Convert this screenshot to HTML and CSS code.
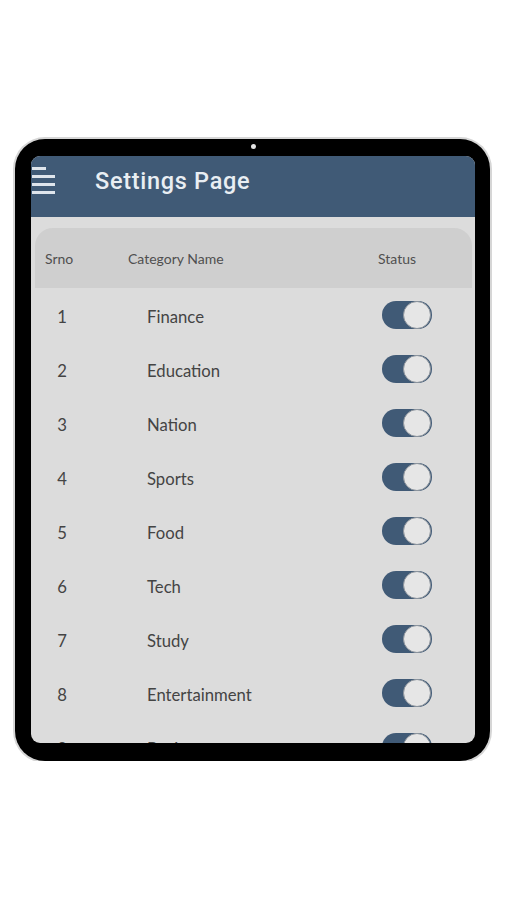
FILE: index.html
```html
<!DOCTYPE html>
<html lang="en">
<head>
<meta charset="utf-8">
<title>Settings Page</title>
<link rel="stylesheet" href="styles.css">
</head>
<body>
<div class="device">
  <span class="camera"></span>
  <div class="screen">
    <header class="appbar">
      <div class="menu" aria-label="menu">
        <span class="bar short"></span>
        <span class="bar"></span>
        <span class="bar"></span>
        <span class="bar"></span>
      </div>
      <h1 class="title">Settings Page</h1>
    </header>
    <div class="table">
      <div class="thead">
        <div class="th c1">Srno</div>
        <div class="th c2">Category Name</div>
        <div class="th c3">Status</div>
      </div>
      <div class="row"><div class="num">1</div><div class="name">Finance</div><div class="status"><span class="toggle"><span class="knob"></span></span></div></div>
      <div class="row"><div class="num">2</div><div class="name">Education</div><div class="status"><span class="toggle"><span class="knob"></span></span></div></div>
      <div class="row"><div class="num">3</div><div class="name">Nation</div><div class="status"><span class="toggle"><span class="knob"></span></span></div></div>
      <div class="row"><div class="num">4</div><div class="name">Sports</div><div class="status"><span class="toggle"><span class="knob"></span></span></div></div>
      <div class="row"><div class="num">5</div><div class="name">Food</div><div class="status"><span class="toggle"><span class="knob"></span></span></div></div>
      <div class="row"><div class="num">6</div><div class="name">Tech</div><div class="status"><span class="toggle"><span class="knob"></span></span></div></div>
      <div class="row"><div class="num">7</div><div class="name">Study</div><div class="status"><span class="toggle"><span class="knob"></span></span></div></div>
      <div class="row"><div class="num">8</div><div class="name">Entertainment</div><div class="status"><span class="toggle"><span class="knob"></span></span></div></div>
      <div class="row"><div class="num">9</div><div class="name">Business</div><div class="status"><span class="toggle"><span class="knob"></span></span></div></div>
    </div>
  </div>
</div>
</body>
</html>
```
FILE: styles.css
```css
html, body {
  margin: 0;
  padding: 0;
  background: #ffffff;
}

body {
  font-family: Lato, "Open Sans", sans-serif;
}

.device {
  position: relative;
  box-sizing: border-box;
  width: 475px;
  height: 622px;
  margin: 139px 0 0 15px;
  padding: 17px 15px 18px 16px;
  background: #000;
  border-radius: 30px;
  box-shadow: 0 0 0 2px #d6d6d6;
}

.camera {
  position: absolute;
  left: 236px;
  top: 5px;
  width: 5px;
  height: 5px;
  border-radius: 50%;
  background: #e4e4e4;
}

.screen {
  height: 100%;
  overflow: hidden;
  border-radius: 9px;
  background: #dcdcdc;
}

.appbar {
  box-sizing: border-box;
  height: 61px;
  padding: 0 0 12px 1px;
  display: flex;
  align-items: center;
  background: #405a76;
}

.menu {
  display: flex;
  flex-direction: column;
  gap: 5px;
  width: 23px;
}

.bar {
  display: block;
  width: 23px;
  height: 3px;
  background: #dfe5ec;
}

.bar.short {
  width: 14px;
}

.title {
  margin: 0 0 0 40px;
  font-family: Roboto, "Liberation Sans", sans-serif;
  font-weight: 500;
  font-size: 23.5px;
  letter-spacing: 0.7px;
  color: #e9eef3;
}

.table {
  padding: 11px 3px 0 4px;
}

.thead,
.row {
  display: grid;
  grid-template-columns: 48px 1fr 100px;
  align-items: center;
}

.thead {
  height: 60px;
  background: #cfcfcf;
  border-radius: 18px 18px 0 0;
  font-size: 14px;
  color: #505050;
}

.th.c1 { padding-left: 10px; }
.th.c2 { padding-left: 45px; }
.th.c3 { padding-left: 6px; }

.row {
  height: 54px;
  font-size: 16.7px;
  color: #444444;
}

.num {
  text-align: center;
  padding: 3px 0 0 6px;
}

.name {
  padding: 3px 0 0 64px;
}

.status {
  padding-left: 10px;
}

.toggle {
  position: relative;
  display: block;
  width: 50px;
  height: 28px;
  border-radius: 14px;
  background: #405a76;
}

.knob {
  position: absolute;
  right: 1px;
  top: 0;
  box-sizing: border-box;
  width: 28px;
  height: 28px;
  border-radius: 50%;
  background: #e6e6e6;
  border: 1.5px solid #8d949c;
}
```
